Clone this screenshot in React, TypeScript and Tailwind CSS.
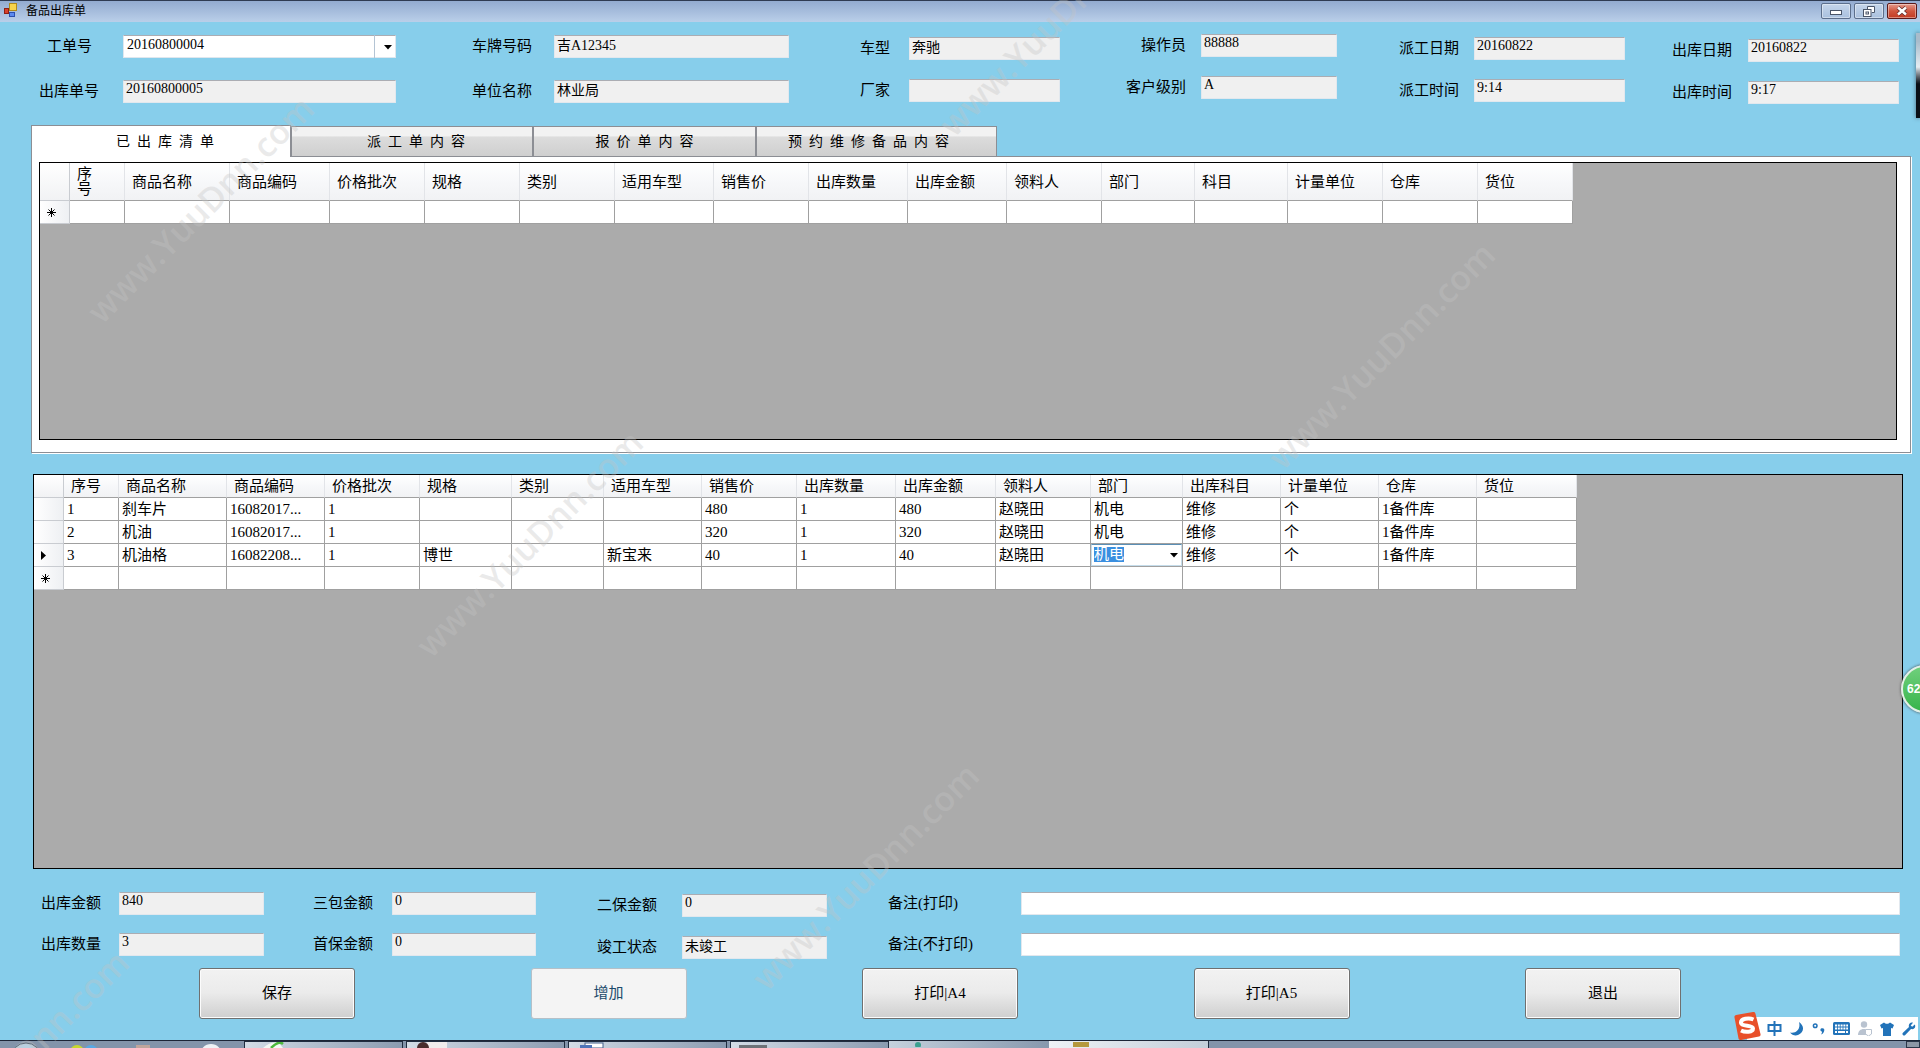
import { useId, useState, type ReactNode } from "react";
import clsx from "clsx";

interface Column {
  title: string;
  width: string;
}

interface FieldProps {
  label: string;
  value?: string;
  labelClass?: string;
  editable?: boolean;
  options?: string[];
}

const stockedColumns: Column[] = [
  { title: "序号", width: "w-[55px]" },
  { title: "商品名称", width: "w-[105px]" },
  { title: "商品编码", width: "w-[100px]" },
  { title: "价格批次", width: "w-[95px]" },
  { title: "规格", width: "w-[95px]" },
  { title: "类别", width: "w-[95px]" },
  { title: "适用车型", width: "w-[99px]" },
  { title: "销售价", width: "w-[95px]" },
  { title: "出库数量", width: "w-[99px]" },
  { title: "出库金额", width: "w-[99px]" },
  { title: "领料人", width: "w-[95px]" },
  { title: "部门", width: "w-[93px]" },
  { title: "科目", width: "w-[93px]" },
  { title: "计量单位", width: "w-[95px]" },
  { title: "仓库", width: "w-[95px]" },
  { title: "货位", width: "w-[95px]" },
];

const detailColumns: Column[] = [
  { title: "序号", width: "w-[55px]" },
  { title: "商品名称", width: "w-[108px]" },
  { title: "商品编码", width: "w-[98px]" },
  { title: "价格批次", width: "w-[95px]" },
  { title: "规格", width: "w-[92px]" },
  { title: "类别", width: "w-[92px]" },
  { title: "适用车型", width: "w-[98px]" },
  { title: "销售价", width: "w-[95px]" },
  { title: "出库数量", width: "w-[99px]" },
  { title: "出库金额", width: "w-[100px]" },
  { title: "领料人", width: "w-[95px]" },
  { title: "部门", width: "w-[92px]" },
  { title: "出库科目", width: "w-[98px]" },
  { title: "计量单位", width: "w-[98px]" },
  { title: "仓库", width: "w-[98px]" },
  { title: "货位", width: "w-[100px]" },
];

const detailRows: string[][] = [
  ["1", "刹车片", "16082017...", "1", "", "", "", "480", "1", "480", "赵晓田", "机电", "维修", "个", "1备件库", ""],
  ["2", "机油", "16082017...", "1", "", "", "", "320", "1", "320", "赵晓田", "机电", "维修", "个", "1备件库", ""],
  ["3", "机油格", "16082208...", "1", "博世", "", "新宝来", "40", "1", "40", "赵晓田", "机电", "维修", "个", "1备件库", ""],
];

const DEPARTMENT = 11;

const tabs = [
  { title: "已  出  库  清  单", width: "w-[260px] pl-2" },
  { title: "派  工  单  内  容", width: "w-[242px] pl-2" },
  { title: "报  价  单  内  容", width: "w-[223px]" },
  { title: "预  约  维  修  备  品  内  容", width: "w-[241px] pr-4" },
];

const actions = ["保存", "增加", "打印|A4", "打印|A5", "退出"];

function DropArrow() {
  return (
    <svg viewBox="0 0 8 5" className="h-[5px] w-2" aria-hidden="true">
      <path d="M0 0h8L4 4.6z" fill="#000" />
    </svg>
  );
}

function Field({ label, value = "", labelClass = "w-[60px]", editable, options }: FieldProps) {
  const id = useId();
  return (
    <div className="flex items-center">
      <label htmlFor={id} className={clsx("shrink-0 whitespace-nowrap text-[15px] leading-[23px]", labelClass)}>
        {label}
      </label>
      {options ? (
        <div className="relative min-w-0 flex-1">
          <select
            id={id}
            defaultValue={value}
            className="block h-[23px] w-full appearance-none border border-[#dfe7ee] border-t-[#abadb3] bg-white px-[3px] pb-1 text-sm leading-[17px] outline-none"
          >
            {options.map((o) => (
              <option key={o}>{o}</option>
            ))}
          </select>
          <span className="pointer-events-none absolute inset-y-0 right-0 flex w-[22px] items-center justify-center border-l border-[#b4c4d4] pt-0.5 pl-1">
            <DropArrow />
          </span>
        </div>
      ) : (
        <input
          id={id}
          defaultValue={value}
          readOnly={!editable}
          className={clsx(
            "block h-[23px] min-w-0 flex-1 rounded-[1px] border border-[#e2e8ee] border-t-[#abadb3] px-0.5 pb-[5px] text-sm leading-[17px] outline-none",
            editable ? "bg-white" : "bg-[#f0f0f0]"
          )}
        />
      )}
    </div>
  );
}

function FieldColumn({ className, children }: { className: string; children: ReactNode }) {
  return <div className={clsx("flex min-w-0 flex-col", className)}>{children}</div>;
}

function RowHeader({ mark }: { mark?: "current" | "new" }) {
  return (
    <th scope="row" className="border-r border-b border-[#c9ccd1] bg-linear-to-r from-white to-[#eef0f3] p-0">
      {mark === "current" && (
        <svg viewBox="0 0 5 9" className="ml-[7px] h-[9px] w-[5px]" aria-label="当前行">
          <path d="M0 0v9l5-4.5z" fill="#000" />
        </svg>
      )}
      {mark === "new" && (
        <svg viewBox="0 0 9 9" className="ml-[7px] h-[9px] w-[9px]" aria-label="新行">
          <path d="M4.500 0v9M0 4.500h9M1.500 1.500l6 6M7.500 1.500l-6 6" stroke="#000" strokeWidth="1" />
        </svg>
      )}
    </th>
  );
}

function DataGrid({
  columns,
  rows,
  current,
  tall,
  className,
}: {
  columns: Column[];
  rows: string[][];
  current?: number;
  tall?: boolean;
  className: string;
}) {
  return (
    <div className={clsx("overflow-auto border border-black bg-[#ababab]", className)}>
      <table
        className={clsx("table-fixed border-separate border-spacing-0 text-[15px]", tall ? "w-[1533px]" : "w-[1543px]")}
      >
        <colgroup>
          <col className="w-[30px]" />
          {columns.map((c) => (
            <col key={c.title} className={c.width} />
          ))}
        </colgroup>
        <thead>
          <tr className={tall ? "h-[38px]" : "h-[23px]"}>
            <th className="border-r border-b border-[#c9ccd1] bg-linear-to-b from-white to-[#f1f2f4] p-0" />
            {columns.map((c, i) => (
              <th
                key={c.title}
                scope="col"
                className="border-r border-b border-r-[#e2e4e8] border-b-[#a0a0a0] bg-linear-to-b from-white via-[#f7f8fa] to-[#f1f2f4] p-0 pt-px pl-[7px] text-left leading-[15px] font-normal"
              >
                {/* 高表头时序号竖排 */}
                <span className={clsx("block", tall && i === 0 && "w-[15px] break-all")}>{c.title}</span>
              </th>
            ))}
          </tr>
        </thead>
        <tbody>
          {rows.map((row, r) => (
            <tr key={row[0]} className="h-[23px]">
              <RowHeader mark={r === current ? "current" : undefined} />
              {row.map((cell, c) =>
                r === current && c === DEPARTMENT ? (
                  <td key={c} className="border-r border-b border-[#a0a0a0] bg-white p-0">
                    <div className="relative">
                      <select
                        aria-label="部门"
                        defaultValue={cell}
                        className="block h-[22px] w-full appearance-none border border-[#c5dcea] border-t-[#5b8fb5] bg-white bg-[linear-gradient(#3a8fe0,#3a8fe0)] bg-[length:30px_15px] bg-[position:2px_2px] bg-no-repeat px-0.5 pb-0.5 text-[15px] leading-[18px] text-white outline-none"
                      >
                        <option>{cell}</option>
                      </select>
                      <span className="pointer-events-none absolute inset-y-0 right-1 flex items-center">
                        <DropArrow />
                      </span>
                    </div>
                  </td>
                ) : (
                  <td
                    key={c}
                    className="overflow-hidden border-r border-b border-[#a0a0a0] bg-white p-0 pl-[3px] leading-[22px] whitespace-nowrap"
                  >
                    {cell}
                  </td>
                )
              )}
            </tr>
          ))}
          <tr className="h-[23px]">
            <RowHeader mark="new" />
            {columns.map((c) => (
              <td key={c.title} className="border-r border-b border-[#a0a0a0] bg-white p-0" />
            ))}
          </tr>
        </tbody>
      </table>
    </div>
  );
}

function TitleBar() {
  const button = "flex h-4 w-[30px] items-center justify-center rounded-[2px] border shadow-[inset_0_0_0_1px_#ffffff66]";
  return (
    <header className="flex h-[22px] shrink-0 items-start border-t border-[#2f3b52] bg-linear-to-b from-[#93abd0] to-[#bacfe9] pr-[3px] pl-1">
      <svg viewBox="0 0 14 14" className="mt-[2px] h-[14px] w-[14px]" aria-hidden="true">
        <rect x="5.500" y="0.500" width="7" height="7" fill="#f7d34c" stroke="#b08a1c" />
        <rect x="0.500" y="5.500" width="4" height="5" fill="#d8402c" stroke="#8e1f14" />
        <rect x="5.500" y="9.500" width="5" height="4" fill="#5c8af0" stroke="#2c4fae" />
      </svg>
      <h1 className="ml-2 font-['Noto_Sans_CJK_SC',sans-serif] text-xs leading-[18px]">备品出库单</h1>
      <div className="mt-[2px] ml-auto flex gap-[3px]">
        <button type="button" aria-label="最小化" className={clsx(button, "border-[#5c6f8c] bg-linear-to-b from-[#c5d5ea] to-[#a9c0de]")}>
          <svg viewBox="0 0 12 8" className="h-2 w-3">
            <rect x="0.500" y="3.500" width="11" height="4" fill="#fff" stroke="#4a5568" />
          </svg>
        </button>
        <button type="button" aria-label="还原" className={clsx(button, "border-[#5c6f8c] bg-linear-to-b from-[#c5d5ea] to-[#a9c0de]")}>
          <svg viewBox="0 0 12 11" className="h-[11px] w-3" fill="none">
            <path d="M4.500 3V.5h7v6H9" fill="#fff" stroke="#4a5568" />
            <rect x="0.500" y="3.500" width="7.500" height="7" fill="#fff" stroke="#4a5568" />
            <rect x="3" y="6" width="2.500" height="2" stroke="#4a5568" />
          </svg>
        </button>
        <button type="button" aria-label="关闭" className={clsx(button, "border-[#5a1a1a] bg-linear-to-b from-[#e39a8c] via-[#d0563f] to-[#c23a22]")}>
          <svg viewBox="0 0 12 10" className="h-2.5 w-3">
            <path d="M2 1.500l8 7M10 1.500l-8 7" stroke="#5b2a2a" strokeWidth="4" />
            <path d="M2 1.500l8 7M10 1.500l-8 7" stroke="#fff" strokeWidth="2.500" />
          </svg>
        </button>
      </div>
    </header>
  );
}

function ImeBar() {
  return (
    <div className="absolute right-[2px] bottom-2 flex h-[23px] items-center bg-white pr-0.5 pl-[34px] text-[#2273b9]">
      <svg viewBox="0 0 28 28" className="absolute bottom-0 left-0 h-7 w-7" aria-hidden="true">
        <path d="M0 0h14v28H0z" fill="#87ceeb" />
        <path d="M1.500 5.500Q1 3.500 3 3L20 0q2-.3 2.400 1.500L27.500 22q.4 2-1.500 2.500L8 28q-2 .3-2.500-1.500z" fill="#e8502a" />
        <path d="M20.500 7.500C16 5.500 7.500 6.500 8 11c.5 4 12 1.500 12 5.500 0 4-8 4-12 2" fill="none" stroke="#fff" strokeWidth="4" />
      </svg>
      <div className="flex items-center gap-2">
        <svg viewBox="0 0 15 15" className="h-[15px] w-[15px]" fill="none" stroke="currentColor" strokeWidth="2" aria-label="中文">
          <path d="M1.500 4h12v6h-12zM7.500 0v15" />
        </svg>
        <svg viewBox="0 0 14 14" className="h-[14px] w-[14px]" aria-hidden="true">
          <path d="M9 0c6 4 5 11-1 13-3 1-6 0-8-2.500C6 12 11 7 9 0z" fill="currentColor" />
        </svg>
        <svg viewBox="0 0 13 13" className="h-[13px] w-[13px]" aria-hidden="true">
          <circle cx="3.200" cy="3.700" r="1.800" fill="none" stroke="currentColor" strokeWidth="1.500" />
          <path d="M9 6.500c3-1 4 1 3 3-.5 1.500-1.500 2.500-3 3 1-1.500 1.200-2 .8-3-1.600-.3-1.800-2.300-.8-3z" fill="currentColor" />
        </svg>
        <svg viewBox="0 0 17 13" className="h-[13px] w-[17px]" aria-hidden="true">
          <rect width="17" height="13" rx="1.500" fill="currentColor" />
          <path d="M2 3.500h13M2 6.500h13" stroke="#fff" strokeWidth="2" strokeDasharray="2 .8" />
          <path d="M2 10h2M5 10h7M13 10h2" stroke="#fff" strokeWidth="1.800" />
        </svg>
        <svg viewBox="0 0 14 15" className="h-[15px] w-[14px]" aria-hidden="true">
          <circle cx="6" cy="3.500" r="3.200" fill="#b9c3d0" />
          <path d="M0 14c0-8 11-8 12 0z" fill="#b9c3d0" />
          <path d="M7.500 8.500h6v4.500l-3 2-3-2z" fill="#fff" stroke="#b9c3d0" />
        </svg>
        <svg viewBox="0 0 14 14" className="h-[14px] w-[14px]" aria-hidden="true">
          <path d="M4 .5c1.500 1.800 4.500 1.800 6 0l4 2.500-1.500 3.500L11 6v8H3V6l-1.500.5L0 3z" fill="currentColor" />
        </svg>
        <svg viewBox="0 0 14 14" className="h-[14px] w-[14px]" aria-hidden="true">
          <path d="M12.800 2.500l-2.600 2.300-1.500-1.400L11 .7C8.500-.3 6 2 7 5L.7 11c-1 1.300.9 3.400 2.300 2.300L9 7c3 .8 5.200-1.800 3.800-4.500z" fill="currentColor" />
        </svg>
      </div>
    </div>
  );
}

function Taskbar() {
  const task = "h-full w-[159px] border border-b-0 border-[#1f2c3f] bg-linear-to-r from-[#d3dce6] to-[#8a9bb0]";
  return (
    <footer className="flex h-2 shrink-0 overflow-hidden border-t border-[#1c2536] bg-[#8394aa]">
      <svg viewBox="0 0 244 7" className="h-[7px] w-[244px] shrink-0" aria-hidden="true">
        <circle cx="26" cy="17" r="15" fill="#b9d0e0" stroke="#2c4257" />
        <circle cx="77" cy="11" r="7" fill="#c8d82c" />
        <circle cx="91" cy="11" r="7" fill="#58a8e4" />
        <rect x="136" y="4" width="14" height="6" fill="#c0a59c" />
        <circle cx="211" cy="14" r="11" fill="#eef2f6" />
      </svg>
      <div className="flex gap-[3px]">
        <div className={task}>
          <svg viewBox="0 0 40 6" className="ml-4 h-1.5 w-10" aria-hidden="true">
            <path d="M2 6Q10-1 18 1l4 5z" fill="#f4f8f4" />
            <path d="M10 6Q18-2 22 2" fill="none" stroke="#4db83c" strokeWidth="2.500" />
          </svg>
        </div>
        <div className={task}>
          <svg viewBox="0 0 40 6" className="ml-2 h-1.5 w-10" aria-hidden="true">
            <rect x="12" width="20" height="6" fill="#f1ecec" />
            <circle cx="8" cy="6" r="6" fill="#4a2c2c" />
          </svg>
        </div>
        <div className={task}>
          <svg viewBox="0 0 40 6" className="ml-2 h-1.5 w-10" aria-hidden="true">
            <rect x="8" y="1" width="18" height="5" fill="#fff" stroke="#44608a" />
            <rect x="3" y="3" width="12" height="3" fill="#4f74b8" />
          </svg>
        </div>
        <div className={task}>
          <svg viewBox="0 0 40 6" className="ml-2 h-1.5 w-10" aria-hidden="true">
            <rect y="3" width="28" height="3" fill="#6d7278" />
          </svg>
        </div>
      </div>
      <div className="h-full w-[160px] bg-linear-to-r from-[#c5d1dd] to-[#8798ad]">
        <svg viewBox="0 0 40 6" className="ml-3 h-1.5 w-10" aria-hidden="true">
          <circle cx="17" cy="4" r="3" fill="#3ba090" />
        </svg>
      </div>
      <div className="h-full w-[160px] border-r border-[#1f2c3f] bg-linear-to-r from-[#eef2f6] to-[#c3ced9]">
        <svg viewBox="0 0 40 6" className="ml-3 h-1.5 w-10" aria-hidden="true">
          <rect x="12" y="1" width="16" height="5" fill="#b5983c" />
        </svg>
      </div>
      <div className="ml-auto h-full w-[14px] border border-[#2b3648] bg-[#8d97a5]" />
    </footer>
  );
}

function Watermarks() {
  const mark =
    "absolute -translate-x-1/2 -translate-y-1/2 -rotate-45 font-['Open_Sans',sans-serif] text-[34px] leading-none font-semibold whitespace-nowrap text-[#c4c4c4]/35";
  return (
    <div className="pointer-events-none absolute inset-0 z-20 overflow-hidden select-none" aria-hidden="true">
      <span className={clsx(mark, "top-[209px] left-[200px]")}>www.YuuDnn.com</span>
      <span className={clsx(mark, "top-[543px] left-[529px]")}>www.YuuDnn.com</span>
      <span className={clsx(mark, "top-[355px] left-[1381px]")}>www.YuuDnn.com</span>
      <span className={clsx(mark, "top-[876px] left-[865px]")}>www.YuuDnn.com</span>
      <span className={clsx(mark, "top-[22px] left-[1052px]")}>www.YuuDnn.com</span>
      <span className={clsx(mark, "top-[1063px] left-[15px]")}>www.YuuDnn.com</span>
    </div>
  );
}

/** 备品出库单 */
export default function App() {
  const [tab, setTab] = useState(0);

  return (
    <div className="relative flex h-screen flex-col overflow-hidden bg-[#87ceeb] font-['Liberation_Serif','Noto_Sans_CJK_SC',serif] text-black">
      <TitleBar />

      <section className="grid grid-cols-[396fr_393fr_271fr_277fr_288fr_274fr] pr-[21px] pb-[21px]">
        <FieldColumn className="gap-[22px] pt-[13px] pl-[39px]">
          <Field label="工单号" value="20160800004" labelClass="w-[84px] pl-2" options={["20160800004"]} />
          <Field label="出库单号" value="20160800005" labelClass="w-[84px]" />
        </FieldColumn>
        <FieldColumn className="gap-[22px] pt-[13px] pl-[76px]">
          <Field label="车牌号码" value="吉A12345" labelClass="w-[82px]" />
          <Field label="单位名称" value="林业局" labelClass="w-[82px]" />
        </FieldColumn>
        <FieldColumn className="gap-[19px] pt-[15px] pl-[71px]">
          <Field label="车型" value="奔驰" labelClass="w-[49px]" />
          <Field label="厂家" labelClass="w-[49px]" />
        </FieldColumn>
        <FieldColumn className="gap-[19px] pt-3 pl-[65px]">
          <Field label="操作员" value="88888" labelClass="w-[76px] pr-[15px] text-right" />
          <Field label="客户级别" value="A" labelClass="w-[76px] pr-[15px] text-right" />
        </FieldColumn>
        <FieldColumn className="gap-[19px] pt-[15px] pl-[62px]">
          <Field label="派工日期" value="20160822" labelClass="w-[75px]" />
          <Field label="派工时间" value="9:14" labelClass="w-[75px]" />
        </FieldColumn>
        <FieldColumn className="gap-[19px] pt-[17px] pl-[47px]">
          <Field label="出库日期" value="20160822" labelClass="w-[76px]" />
          <Field label="出库时间" value="9:17" labelClass="w-[76px]" />
        </FieldColumn>
      </section>

      <section className="mr-[9px] ml-[31px]">
        <div role="tablist" className="flex h-[31px]">
          {tabs.map((t, i) => (
            <button
              key={t.title}
              type="button"
              role="tab"
              aria-selected={i === tab}
              onClick={() => setTab(i)}
              className={clsx(
                "border border-b-0 border-[#8c8e94] text-sm whitespace-pre",
                t.width,
                i === tab
                  ? "z-10 -mb-px bg-white"
                  : "mt-px bg-linear-to-b from-[#f2f2f2] from-30% via-[#dcdcdc] via-35% to-[#cfcfcf]"
              )}
            >
              {t.title}
            </button>
          ))}
        </div>
        <div className="border border-[#8c8e94] bg-white pt-[5px] pr-[13px] pb-3 pl-[7px] shadow-[1px_1px_0_#fff]">
          <DataGrid columns={stockedColumns} rows={[]} tall className="h-[278px]" />
        </div>
      </section>

      <DataGrid
        columns={detailColumns}
        rows={detailRows}
        current={2}
        className="mt-[21px] mr-[17px] ml-[33px] min-h-[160px] flex-1"
      />

      <section className="grid grid-cols-[264fr_272fr_291fr_1073fr] pt-[23px] pr-5">
        <FieldColumn className="gap-[18px] pl-[41px]">
          <Field label="出库金额" value="840" labelClass="w-[78px]" />
          <Field label="出库数量" value="3" labelClass="w-[78px]" />
        </FieldColumn>
        <FieldColumn className="gap-[18px] pl-[49px]">
          <Field label="三包金额" value="0" labelClass="w-[79px]" />
          <Field label="首保金额" value="0" labelClass="w-[79px]" />
        </FieldColumn>
        <FieldColumn className="gap-[19px] pt-0.5 pl-[61px]">
          <Field label="二保金额" value="0" labelClass="w-[85px]" />
          <Field label="竣工状态" value="未竣工" labelClass="w-[85px]" />
        </FieldColumn>
        <FieldColumn className="gap-[18px] pl-[61px]">
          <Field label="备注(打印)" labelClass="w-[133px]" editable />
          <Field label="备注(不打印)" labelClass="w-[133px]" editable />
        </FieldColumn>
      </section>

      <div className="mt-[9px] mb-[21px] flex justify-between pr-[239px] pl-[199px]">
        {actions.map((name) => (
          <button
            key={name}
            type="button"
            className={clsx(
              "h-[51px] w-[156px] rounded-[3px] border text-[15px]",
              name === "增加"
                ? "border-[#b5c0c8] bg-[#f4f4f4] text-[#1b4a6b]"
                : "border-[#707070] bg-linear-to-b from-[#f2f2f2] via-[#ebebeb] via-48% to-[#cfcfcf] shadow-[inset_0_0_0_1px_#fcfcfc]"
            )}
          >
            {name}
          </button>
        ))}
      </div>

      <Taskbar />
      <ImeBar />

      {/* 右侧悬浮球 */}
      <div className="absolute top-[665px] -right-[29px] flex h-12 w-12 items-center rounded-full border-2 border-[#e4efe6] bg-linear-to-b from-[#6fd07c] to-[#35b44a] pl-1 font-['Liberation_Sans',sans-serif] text-xs font-bold text-white shadow-[0_0_3px_#444]">
        62
      </div>
      <div className="absolute top-[33px] right-0 h-[85px] w-1 bg-linear-to-b from-[#a9bccb] from-10% via-[#e6edf2] via-40% to-[#0b0f16] to-60% shadow-[0_0_4px_#4a6a7a]" />

      <Watermarks />
    </div>
  );
}
